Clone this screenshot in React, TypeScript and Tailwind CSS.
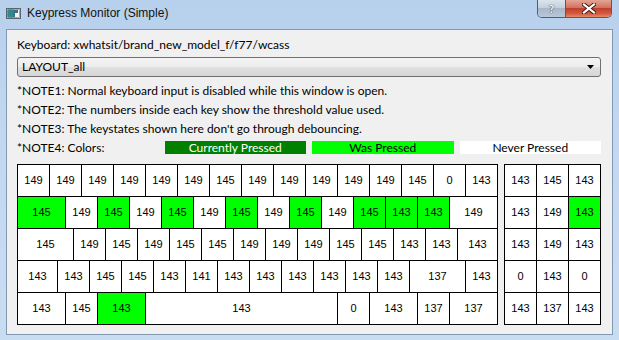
import React from "react";

type K = { v: string; u?: number; g?: boolean };

const W: Record<number, string> = {
  1: "w-[32px]",
  1.25: "w-[40px]",
  1.5: "w-[48px]",
  1.75: "w-[56px]",
  6: "w-[192px]",
};

const r = (vals: (number | [number, number?, boolean?])[]): K[] =>
  vals.map((x) =>
    typeof x === "number" ? { v: String(x) } : { v: String(x[0]), u: x[1] ?? 1, g: x[2] }
  );

const main: K[][] = [
  r([149, 149, 149, 149, 149, 149, 145, 149, 149, 149, 149, 149, 145, 0, 143]),
  r([
    [145, 1.5, true],
    149,
    [145, 1, true],
    149,
    [145, 1, true],
    149,
    [145, 1, true],
    149,
    [145, 1, true],
    149,
    [145, 1, true],
    [143, 1, true],
    [143, 1, true],
    [149, 1.5],
  ]),
  r([[145, 1.75], 149, 145, 149, 145, 145, 149, 149, 149, 145, 145, 143, 143, [143, 1.25]]),
  r([[143, 1.25], 143, 145, 145, 143, 141, 143, 143, 143, 143, 143, 143, [137, 1.75], 143]),
  r([[143, 1.5], 145, [143, 1.5, true], [143, 6], 0, [143, 1.5], 137, [137, 1.5]]),
];

const side: K[][] = [
  r([143, 145, 143]),
  r([143, 149, [143, 1, true]]),
  r([143, 149, 143]),
  r([0, 143, 0]),
  r([143, 137, 143]),
];

function Block({ rows }: { rows: K[][] }) {
  return (
    <div className="flex flex-col border-l border-t border-black">
      {rows.map((row, i) => (
        <div key={i} className="flex">
          {row.map((k, j) => (
            <div
              key={j}
              className={`${W[k.u ?? 1]} h-[32px] flex items-center justify-center border-r border-b border-black text-[11px] text-black ${
                k.g ? "bg-[#00ff00]" : "bg-white"
              }`}
              style={{ fontFamily: '"Liberation Sans", Arial, sans-serif' }}
            >
              {k.v}
            </div>
          ))}
        </div>
      ))}
    </div>
  );
}

export default function App() {
  return (
    <div
      className="w-[619px] h-[340px] overflow-hidden flex flex-col bg-[linear-gradient(to_bottom,#b7d0ec_0%,#c2d8f0_40%,#c9ddf2_100%)] text-black"
      style={{ fontFamily: 'Lato, "Liberation Sans", Arial, sans-serif' }}
    >
      {/* Title bar */}
      <div className="h-[29px] flex items-start shrink-0">
        <div className="flex items-start pl-[6px] pt-[8px]">
          <svg width="15" height="11" viewBox="0 0 15 11">
            <rect x="0.5" y="0.5" width="14" height="10" fill="#e8eef4" stroke="#5a6470" />
            <rect x="1.5" y="1.5" width="12" height="8" fill="#3d6f86" />
            <rect x="1.5" y="1.5" width="6" height="8" fill="#2f8a8f" />
            <rect x="9" y="5" width="4" height="4" fill="#f4f4f4" />
            <rect x="12" y="2" width="1" height="3" fill="#f4f4f4" />
          </svg>
          <div
            className="ml-[6px] -mt-[3px] text-[12px] leading-[16px] text-[#111]"
            style={{ fontFamily: '"Liberation Sans", Arial, sans-serif' }}
          >
            Keypress Monitor (Simple)
          </div>
        </div>
        <div className="ml-auto mr-[7px] flex h-[18px] rounded-b-[5px] border border-t-0 border-[#555c66] overflow-hidden">
          <div className="w-[28px] flex items-center justify-center bg-[linear-gradient(to_bottom,#dbe4ee_0%,#c3d0de_45%,#a9b8c9_50%,#b8c8d8_100%)] border-r border-[#555c66]">
            <span className="text-[12px] font-bold text-white leading-none [text-shadow:0_0_1px_#333,0_0_1px_#333]">?</span>
          </div>
          <div className="w-[45px] flex items-center justify-center bg-[linear-gradient(to_bottom,#e4a595_0%,#d2725f_45%,#c0402b_50%,#d35a3f_80%,#e48a6a_100%)]">
            <svg width="14" height="11" viewBox="0 0 14 11">
              <path d="M2 1.5 L12 9.5 M12 1.5 L2 9.5" stroke="#3b1a14" strokeWidth="4" strokeLinecap="square" />
              <path d="M2 1.5 L12 9.5 M12 1.5 L2 9.5" stroke="#ffffff" strokeWidth="2.2" strokeLinecap="square" />
            </svg>
          </div>
        </div>
      </div>

      {/* Client */}
      <div className="mx-[6px] h-[306px] shrink-0 border border-[#8298b3] bg-[#f0f0f0] pl-[10px] pr-[11px] pt-[7px] text-[12px]">
        <div className="leading-[16px]">Keyboard: xwhatsit/brand_new_model_f/f77/wcass</div>
        <div className="mt-[4px] h-[20px] rounded-[3px] border border-[#707070] bg-[linear-gradient(to_bottom,#f4f4f4_0%,#ececec_50%,#e0e0e0_51%,#d6d6d6_100%)] flex items-center pl-[4px] pr-[6px]">
          <span className="leading-[16px]">LAYOUT_all</span>
          <svg className="ml-auto" width="7" height="4" viewBox="0 0 7 4">
            <path d="M0 0 H7 L3.5 4 Z" fill="#000" />
          </svg>
        </div>
        <div className="mt-[4px] flex flex-col">
          <div className="leading-[19px]">*NOTE1: Normal keyboard input is disabled while this window is open.</div>
          <div className="leading-[19px]">*NOTE2: The numbers inside each key show the threshold value used.</div>
          <div className="leading-[19px]">*NOTE3: The keystates shown here don't go through debouncing.</div>
          <div className="h-[19px] grid grid-cols-4 gap-[6px] items-center">
            <div className="leading-[19px]">*NOTE4: Colors:</div>
            <div className="h-[13px] bg-[#008000] text-white leading-[13px] text-center">Currently Pressed</div>
            <div className="h-[13px] bg-[#00ff00] leading-[13px] text-center">Was Pressed</div>
            <div className="h-[13px] bg-white leading-[13px] text-center">Never Pressed</div>
          </div>
        </div>
        <div className="mt-[7px] flex gap-[6px]">
          <Block rows={main} />
          <Block rows={side} />
        </div>
      </div>
    </div>
  );
}
